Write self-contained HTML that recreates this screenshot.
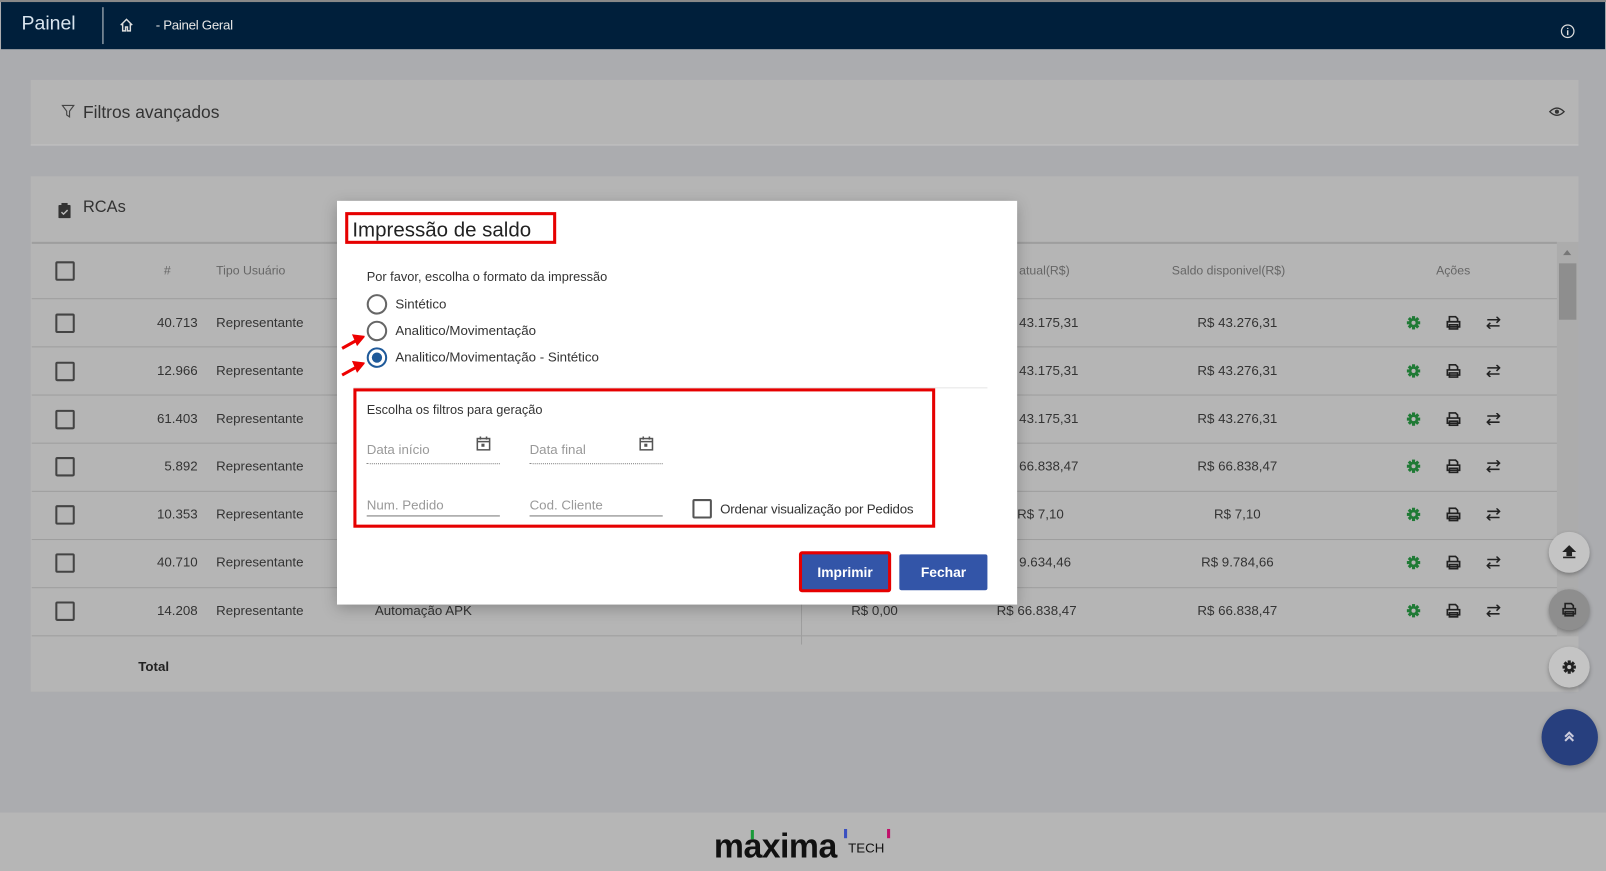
<!DOCTYPE html>
<html><head><meta charset="utf-8"><style>
*{box-sizing:border-box;margin:0;padding:0}
html,body{width:1606px;height:871px;overflow:hidden;background:#abacaf;font-family:"Liberation Sans",sans-serif}
#w{position:absolute;left:0;top:0;width:1568px;height:850px;transform:scale(1.0243,1.0247);transform-origin:0 0;background:#abacaf}
.a{position:absolute}
.hdr{left:1px;top:2px;width:1566px;height:46px;background:#001f3b}
.card{background:#b5b5b5}
.t{position:absolute;white-space:nowrap;color:#333;font-size:13px}
.rl{position:absolute;left:31px;width:1489px;height:1px;background:#9e9e9e}
.cb{position:absolute;left:54px;width:19px;height:19px;border:2px solid #444;border-radius:2px}
</style></head><body><div id="w">
<div class="a" style="left:0;top:0;width:1568px;height:2px;background:#888"></div>
<div class="a hdr"></div>
<div class="t" style="left:21px;top:13px;font-size:19px;color:#d8e4ee">Painel</div>
<div class="a" style="left:100px;top:7px;width:1px;height:36px;background:#c8ccd0"></div>
<svg class="a" style="left:116px;top:17px" width="15" height="15" viewBox="0 0 16 16"><path d="M2 8L8 2l6 6M4 6.5V14h3v-4h2v4h3V6.5" fill="none" stroke="#ddd" stroke-width="1.5"/></svg>
<div class="t" style="left:152px;top:17px;color:#e6e6e6;font-size:13px;letter-spacing:-0.3px">- Painel Geral</div>
<svg class="a" style="left:1523px;top:23px" width="15" height="15" viewBox="0 0 16 16"><circle cx="8" cy="8" r="6.5" fill="none" stroke="#ddd" stroke-width="1.3"/><path d="M8 7v5M8 4.5v1" stroke="#ddd" stroke-width="1.5"/></svg>

<div class="a card" style="left:30px;top:78px;width:1511px;height:64px;border-bottom:1px solid #c4c4c4"></div>
<svg class="a" style="left:60px;top:102px" width="13" height="13" viewBox="0 0 14 14"><path d="M1 1h12L8.5 7v6L5.5 11V7z" fill="none" stroke="#444" stroke-width="1.2"/></svg>
<div class="t" style="left:81px;top:100px;font-size:17px;color:#333">Filtros avançados</div>
<svg class="a" style="left:1512px;top:104px" width="16" height="10" viewBox="0 0 16 10"><path d="M1 5Q8-2 15 5Q8 12 1 5z" fill="none" stroke="#333" stroke-width="1.3"/><circle cx="8" cy="5" r="2" fill="#333"/></svg>

<div class="a card" style="left:30px;top:172px;width:1511px;height:503px"></div>
<div class="a" style="left:1520px;top:236px;width:21px;height:385px;background:#acacac"></div>
<div class="a" style="left:1522px;top:257px;width:17px;height:55px;background:#8e8e8e"></div>
<div class="a" style="left:1526px;top:244px;width:0;height:0;border-left:4px solid transparent;border-right:4px solid transparent;border-bottom:5px solid #777"></div>
<svg class="a" style="left:57px;top:198px" width="12" height="15" viewBox="0 0 12 15"><rect x="0" y="2" width="12" height="13" rx="1" fill="#333"/><rect x="3" y="0" width="6" height="4" fill="#333"/><path d="M3 9l2 2 4-4" fill="none" stroke="#bbb" stroke-width="1.4"/></svg>
<div class="t" style="left:81px;top:194px;font-size:16px">RCAs</div>
<div class="rl" style="top:236px;height:2px"></div>
<div class="cb" style="top:255px"></div>
<div class="t" style="left:160px;top:257px;font-size:12px;color:#666">#</div>
<div class="t" style="left:211px;top:257px;font-size:12px;color:#666">Tipo Usuário</div>
<div class="t" style="left:995px;top:257px;font-size:12px;color:#666">atual(R$)</div>
<div class="t" style="left:1144px;top:257px;font-size:12px;color:#666">Saldo disponivel(R$)</div>
<div class="t" style="left:1402px;top:257px;font-size:12px;color:#666">Ações</div>

<div class="rl" style="top:291px"></div><div class="rl" style="top:338px"></div><div class="rl" style="top:385px"></div><div class="rl" style="top:432px"></div><div class="rl" style="top:479px"></div><div class="rl" style="top:526px"></div><div class="rl" style="top:573px"></div><div class="rl" style="top:620px"></div>
<div class="a" style="left:782px;top:573px;width:1px;height:56px;background:#9e9e9e"></div>

<div id="rows"></div>
<div class="t" style="left:366px;top:588px">Automação APK</div>
<div class="t" style="left:831px;top:588px">R$ 0,00</div>
<div class="t" style="left:135px;top:643px;font-weight:bold;color:#222">Total</div>

<!-- FABs -->
<div class="a" style="left:1512px;top:519px;width:40px;height:40px;border-radius:50%;background:#c4c4c4;box-shadow:0 2px 4px rgba(0,0,0,.3)"></div>
<svg class="a" style="left:1525px;top:532px" width="14" height="14" viewBox="0 0 14 14"><path d="M7 1L2 6h3v4h4V6h3zM1 12h12" fill="#222" stroke="#222" stroke-width="1.5"/></svg>
<div class="a" style="left:1512px;top:575px;width:40px;height:40px;border-radius:50%;background:#8e8e8e;box-shadow:0 2px 4px rgba(0,0,0,.3)"></div>
<svg class="a" style="left:1525px;top:588px" width="14" height="14" viewBox="0 0 14 14"><path d="M3 1h6l2 2v3H3zM1 6h12v5H1zM3 9h8v4H3z" fill="none" stroke="#222" stroke-width="1.6"/></svg>
<div class="a" style="left:1512px;top:631px;width:40px;height:40px;border-radius:50%;background:#c4c4c4;box-shadow:0 2px 4px rgba(0,0,0,.3)"></div>
<svg class="a" style="left:1525px;top:644px" width="14" height="14" viewBox="0 0 14 14"><g fill="#222"><circle cx="7" cy="7" r="4.5"/><rect x="5.5" y="0.5" width="3" height="13"/><rect x="0.5" y="5.5" width="13" height="3"/><rect x="5.5" y="0.5" width="3" height="13" transform="rotate(45 7 7)"/><rect x="5.5" y="0.5" width="3" height="13" transform="rotate(-45 7 7)"/></g><circle cx="7" cy="7" r="2" fill="#c4c4c4"/></svg>
<div class="a" style="left:1505px;top:692px;width:55px;height:55px;border-radius:50%;background:#273f7e;box-shadow:0 2px 5px rgba(0,0,0,.3)"></div>
<svg class="a" style="left:1526px;top:713px" width="12" height="12" viewBox="0 0 12 12"><path d="M2 6l4-4 4 4M2 10l4-4 4 4" fill="none" stroke="#ccd" stroke-width="2"/></svg>

<!-- footer -->
<div class="a" style="left:0;top:793px;width:1568px;height:57px;background:#b6b6b6"></div>
<div class="t" style="left:697px;top:809px;font-size:33px;font-weight:bold;color:#111;letter-spacing:-0.5px;line-height:33px">maxima</div>
<div class="t" style="left:828px;top:820px;font-size:13px;color:#111">TECH</div>
<div class="a" style="left:733px;top:810px;width:3px;height:9px;background:#1a9a3a"></div>
<div class="a" style="left:824px;top:809px;width:3px;height:9px;background:#3a4fc0"></div>
<div class="a" style="left:866px;top:809px;width:3px;height:9px;background:#c0106a"></div>

<!-- dialog -->
<div class="a" style="left:329px;top:196px;width:664px;height:394px;background:#fff;box-shadow:0 4px 14px rgba(0,0,0,.25)"></div>
<div class="a" style="left:337px;top:207px;width:206px;height:31px;border:3px solid #e60000"></div>
<div class="t" style="left:344px;top:214px;font-size:20px;color:#222">Impressão de saldo</div>
<div class="t" style="left:358px;top:263px;font-size:12.5px;color:#333">Por favor, escolha o formato da impressão</div>
<div class="a" style="left:358px;top:287px;width:20px;height:20px;border:2px solid #666;border-radius:50%"></div>
<div class="t" style="left:386px;top:289px">Sintético</div>
<div class="a" style="left:358px;top:313px;width:20px;height:20px;border:2px solid #666;border-radius:50%"></div>
<div class="t" style="left:386px;top:315px">Analitico/Movimentação</div>
<div class="a" style="left:358px;top:339px;width:20px;height:20px;border:2px solid #1f5a9a;border-radius:50%"></div>
<div class="a" style="left:363px;top:344px;width:10px;height:10px;background:#1f5a9a;border-radius:50%"></div>
<div class="t" style="left:386px;top:341px">Analitico/Movimentação - Sintético</div>
<svg class="a" style="left:332px;top:324px" width="24" height="46" viewBox="0 0 24 46"><path d="M2 16L20 6M14 4l8 1-5 6zM2 42L20 32M14 30l8 1-5 6z" stroke="#e00" stroke-width="3" fill="#e00"/></svg>
<div class="a" style="left:345px;top:378px;width:619px;height:1px;background:#e6e6e6"></div>
<div class="a" style="left:345px;top:379px;width:568px;height:136px;border:3px solid #e60000"></div>
<div class="t" style="left:358px;top:393px;font-size:12.5px">Escolha os filtros para geração</div>
<div class="t" style="left:358px;top:431px;color:#999">Data início</div>
<div class="t" style="left:517px;top:431px;color:#999">Data final</div>
<div class="a" style="left:358px;top:452px;width:130px;border-top:1px dotted #888"></div>
<div class="a" style="left:517px;top:452px;width:130px;border-top:1px dotted #888"></div>
<svg class="a" style="left:465px;top:425px" width="14" height="15" viewBox="0 0 14 15"><rect x="1" y="3" width="12" height="11" fill="none" stroke="#555" stroke-width="1.5"/><path d="M1 6h12M4 1v3M10 1v3" stroke="#555" stroke-width="1.5"/><rect x="5" y="8" width="3" height="3" fill="#555"/></svg>
<svg class="a" style="left:624px;top:425px" width="14" height="15" viewBox="0 0 14 15"><rect x="1" y="3" width="12" height="11" fill="none" stroke="#555" stroke-width="1.5"/><path d="M1 6h12M4 1v3M10 1v3" stroke="#555" stroke-width="1.5"/><rect x="5" y="8" width="3" height="3" fill="#555"/></svg>
<div class="t" style="left:358px;top:485px;color:#999">Num. Pedido</div>
<div class="t" style="left:517px;top:485px;color:#999">Cod. Cliente</div>
<div class="a" style="left:358px;top:503px;width:130px;height:1px;background:#777"></div>
<div class="a" style="left:517px;top:503px;width:130px;height:1px;background:#777"></div>
<div class="a" style="left:676px;top:487px;width:19px;height:19px;border:2px solid #555;border-radius:2px"></div>
<div class="t" style="left:703px;top:489px;letter-spacing:-0.2px">Ordenar visualização por Pedidos</div>
<div class="a" style="left:780px;top:538px;width:90px;height:40px;border:3px solid #e60000;border-radius:3px;background:#3355a8"></div>
<div class="t" style="left:798px;top:551px;color:#fff;font-weight:bold;font-size:13.5px">Imprimir</div>
<div class="a" style="left:878px;top:541px;width:86px;height:35px;background:#3355a8;border-radius:2px"></div>
<div class="t" style="left:899px;top:551px;color:#fff;font-weight:bold;font-size:13.5px">Fechar</div>
</div>
<script>
var r=[["40.713","43.175,31","R$ 43.276,31"],["12.966","43.175,31","R$ 43.276,31"],["61.403","43.175,31","R$ 43.276,31"],["5.892","66.838,47","R$ 66.838,47"],["10.353","R$ 7,10","R$ 7,10"],["40.710","9.634,46","R$ 9.784,66"],["14.208","R$ 66.838,47","R$ 66.838,47"]];
var g='<g fill="#1f7a35"><circle cx="7" cy="7" r="4.5"/><rect x="5.5" y="0.5" width="3" height="13"/><rect x="0.5" y="5.5" width="13" height="3"/><rect x="5.5" y="0.5" width="3" height="13" transform="rotate(45 7 7)"/><rect x="5.5" y="0.5" width="3" height="13" transform="rotate(-45 7 7)"/></g><circle cx="7" cy="7" r="2" fill="#b5b5b5"/>';
var h="";r.forEach(function(d,i){var c=315+i*46.8;
h+='<div class="cb" style="top:'+(c-9)+'px"></div>';
h+='<div class="t" style="left:120px;width:73px;text-align:right;top:'+(c-8)+'px">'+d[0]+'</div>';
h+='<div class="t" style="left:211px;top:'+(c-8)+'px">Representante</div>';
h+='<div class="t" style="left:'+(i==6?973:(i==4?993:995))+'px;top:'+(c-8)+'px">'+d[1]+'</div>';
h+='<div class="t" style="left:1128px;width:160px;text-align:center;top:'+(c-8)+'px">'+d[2]+'</div>';
h+='<svg class="a" style="left:1373px;top:'+(c-7)+'px" width="14" height="14" viewBox="0 0 14 14">'+g+'</svg>';
h+='<svg class="a" style="left:1412px;top:'+(c-7)+'px" width="14" height="14" viewBox="0 0 14 14"><path d="M3 1h6l2 2v3H3zM1 6h12v5H1zM3 9h8v4H3z" fill="none" stroke="#222" stroke-width="1.6"/></svg>';
h+='<svg class="a" style="left:1451px;top:'+(c-6)+'px" width="14" height="12" viewBox="0 0 14 12"><path d="M1 3h12M10 0l3 3-3 3M13 9H1M4 6L1 9l3 3" fill="none" stroke="#222" stroke-width="1.5"/></svg>';});
document.getElementById("rows").innerHTML=h;
</script>
</body></html>
